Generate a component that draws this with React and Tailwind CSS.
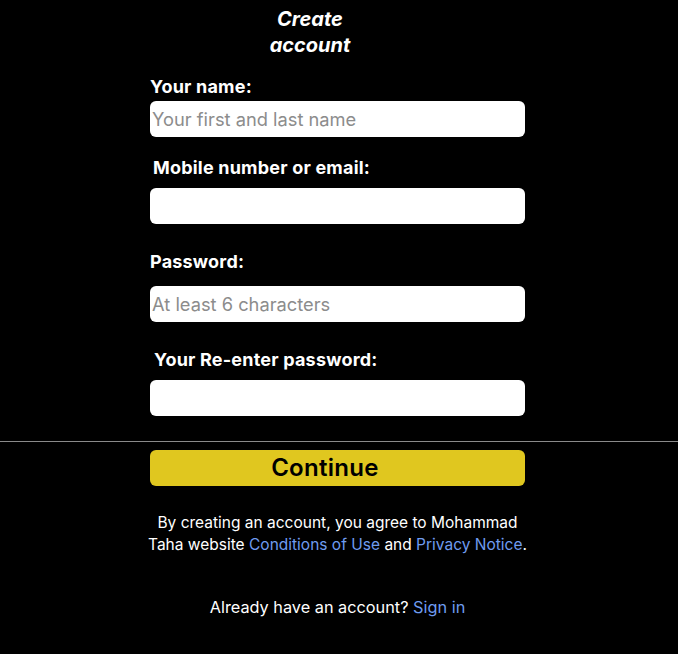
export default function App() {
  const font = { fontFamily: "Inter, 'Liberation Sans', sans-serif" };
  return (
    <div className="min-h-[654px] w-full bg-black text-white" style={font}>
      <div className="ml-[150px] w-[375px] flex flex-col">
        <h1 className="pt-[6px] pr-[55px] text-center text-[20px] leading-[26px] font-bold italic">
          Create
          <br />
          account
        </h1>
        <label className="mt-[18px] text-[18px] leading-[22px] font-bold tracking-[0.2px]">Your name:</label>
        <input
          className="mt-[3px] h-[36px] w-full rounded-[6px] bg-white px-[2px] text-[18.3px] text-black placeholder:text-[#8c8c8c] outline-none"
          placeholder="Your first and last name"
        />
        <label className="mt-[20px] pl-[3px] text-[18px] leading-[22px] font-bold tracking-[0.2px]">Mobile number or email:</label>
        <input className="mt-[9px] h-[36px] w-full rounded-[6px] bg-white px-[2px] text-[18.3px] text-black outline-none" />
        <label className="mt-[27px] text-[18px] leading-[22px] font-bold tracking-[0.2px]">Password:</label>
        <input
          className="mt-[13px] h-[36px] w-full rounded-[6px] bg-white px-[2px] text-[18.3px] text-black placeholder:text-[#8c8c8c] outline-none"
          placeholder="At least 6 characters"
        />
        <label className="mt-[27px] pl-[4px] text-[18px] leading-[22px] font-bold tracking-[0.2px]">Your Re-enter password:</label>
        <input className="mt-[9px] h-[36px] w-full rounded-[6px] bg-white px-[2px] text-[18.3px] text-black outline-none" />
      </div>
      <div className="mt-[25px] h-px w-full bg-[#8a8a8a]" />
      <div className="ml-[150px] w-[375px] flex flex-col">
        <button className="mt-[8px] h-[36px] w-full rounded-[6px] bg-[#e0c71f] pr-[25px] text-[24px] font-semibold tracking-[0.3px] text-black">
          Continue
        </button>
        <p className="-mx-[20px] mt-[26px] whitespace-nowrap text-center text-[15.5px] leading-[22px] text-white">
          By creating an account, you agree to Mohammad
          <br />
          Taha website <span className="text-[#6f9cf0]">Conditions of Use</span> and{" "}
          <span className="text-[#6f9cf0]">Privacy Notice</span>.
        </p>
        <p className="mt-[40px] whitespace-nowrap text-center text-[16.3px] leading-[22px]">
          Already have an account? <span className="text-[#6f9cf0]">Sign in</span>
        </p>
      </div>
    </div>
  );
}
